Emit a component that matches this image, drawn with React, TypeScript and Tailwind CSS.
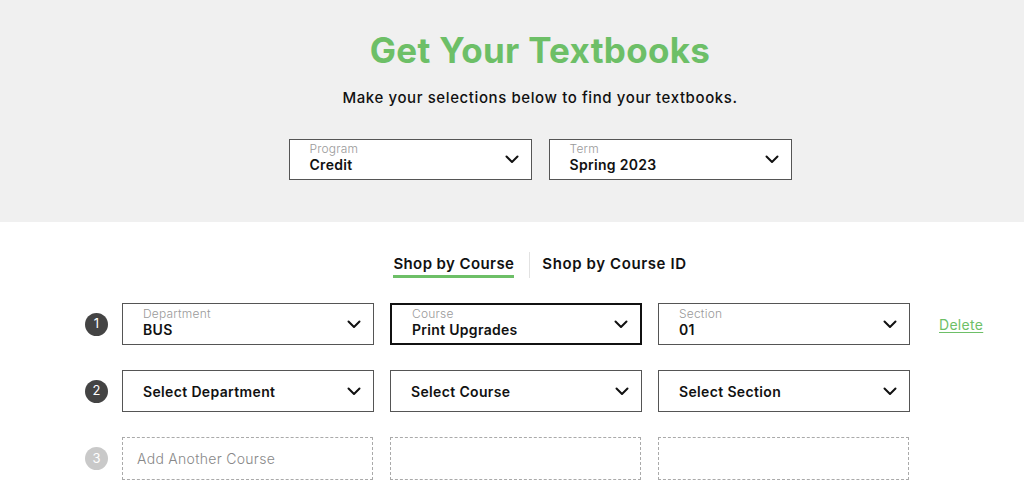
import React from "react";

const Chevron = () => (
  <svg width="14" height="9" viewBox="0 0 14 9" fill="none" className="shrink-0">
    <path d="M1.5 1.5L7 7L12.5 1.5" stroke="#111" strokeWidth="2" strokeLinecap="round" strokeLinejoin="round" />
  </svg>
);

function LabeledSelect({ label, value, w, h, focused }: { label: string; value: string; w: string; h: string; focused?: boolean }) {
  return (
    <div
      className={`${w} ${h} bg-white flex items-center justify-between pl-[20px] pr-[12px] pb-[4px] ${
        focused ? "border-2 border-[#111]" : "border border-[#555]"
      }`}
    >
      <div className="flex flex-col">
        <span className="text-[12px] text-[#9a9a9a] font-light leading-[14px] tracking-[0.2px]">{label}</span>
        <span className="text-[14px] text-[#111] font-semibold leading-[17px] tracking-[0.3px]">{value}</span>
      </div>
      <span className="mt-[4px]">
        <Chevron />
      </span>
    </div>
  );
}

function PlainSelect({ value }: { value: string }) {
  return (
    <div className="w-[252px] h-[42px] bg-white border border-[#555] flex items-center justify-between pl-[20px] pr-[12px]">
      <span className="text-[14px] text-[#111] font-semibold tracking-[0.35px]">{value}</span>
      <Chevron />
    </div>
  );
}

function Num({ n, gray }: { n: number; gray?: boolean }) {
  return (
    <div
      className={`w-[23px] h-[23px] rounded-full flex items-center justify-center text-[13px] text-white ${
        gray ? "bg-[#c9c9c9]" : "bg-[#444]"
      }`}
    >
      {n}
    </div>
  );
}

export default function App() {
  return (
    <div className="w-[1024px] h-[504px] bg-white overflow-hidden" style={{ fontFamily: "Inter, 'Noto Sans', sans-serif" }}>
      <div className="h-[222px] bg-[#f0f0f0] flex flex-col items-center pt-[29px] pl-[56px]">
        <h1 className="text-[35px] leading-[42px] font-bold text-[#6dbf67] tracking-[0.3px]">Get Your Textbooks</h1>
        <p className="mt-[17px] text-[15px] leading-[20px] font-medium text-[#111] tracking-[0.6px]">
          Make your selections below to find your textbooks.
        </p>
        <div className="mt-[31px] flex gap-[17px]">
          <LabeledSelect label="Program" value="Credit" w="w-[243px]" h="h-[41px]" />
          <LabeledSelect label="Term" value="Spring 2023" w="w-[243px]" h="h-[41px]" />
        </div>
      </div>

      <div className="flex justify-center items-start mt-[32px] h-[25px] pl-[56px]">
        <div className="flex flex-col items-center mr-[15px]">
          <span className="block text-[15px] font-semibold text-[#111] leading-[20px] tracking-[0.4px]">Shop by Course</span>
          <div className="mt-[1px] h-[3px] w-full bg-[#6dbf67]" />
        </div>
        <div className="w-px h-[26px] -mt-[2px] bg-[#e2e2e2]" />
        <div className="ml-[12px] flex">
          <span className="block text-[15px] font-semibold text-[#111] leading-[20px] tracking-[0.6px]">Shop by Course ID</span>
        </div>
      </div>

      <div className="mt-[24px] pl-[85px] flex flex-col gap-[25px]">
        <div className="flex items-center">
          <Num n={1} />
          <div className="ml-[14px] flex gap-[16px] items-center">
            <LabeledSelect label="Department" value="BUS" w="w-[252px]" h="h-[42px]" />
            <LabeledSelect label="Course" value="Print Upgrades" w="w-[252px]" h="h-[42px]" focused />
            <LabeledSelect label="Section" value="01" w="w-[252px]" h="h-[42px]" />
          </div>
          <a className="ml-[29px] text-[14px] text-[#6dbf67] underline underline-offset-2 tracking-[0.3px]">Delete</a>
        </div>
        <div className="flex items-center">
          <Num n={2} />
          <div className="ml-[14px] flex gap-[16px]">
            <PlainSelect value="Select Department" />
            <PlainSelect value="Select Course" />
            <PlainSelect value="Select Section" />
          </div>
        </div>
        <div className="flex items-center">
          <Num n={3} gray />
          <div className="ml-[14px] flex gap-[17px]">
            <div className="w-[251px] h-[43px] border border-dashed border-[#aaa] flex items-center pl-[14px]">
              <span className="text-[14px] text-[#888] font-light tracking-[0.3px]">Add Another Course</span>
            </div>
            <div className="w-[251px] h-[43px] border border-dashed border-[#aaa]" />
            <div className="w-[251px] h-[43px] border border-dashed border-[#aaa]" />
          </div>
        </div>
      </div>
    </div>
  );
}
